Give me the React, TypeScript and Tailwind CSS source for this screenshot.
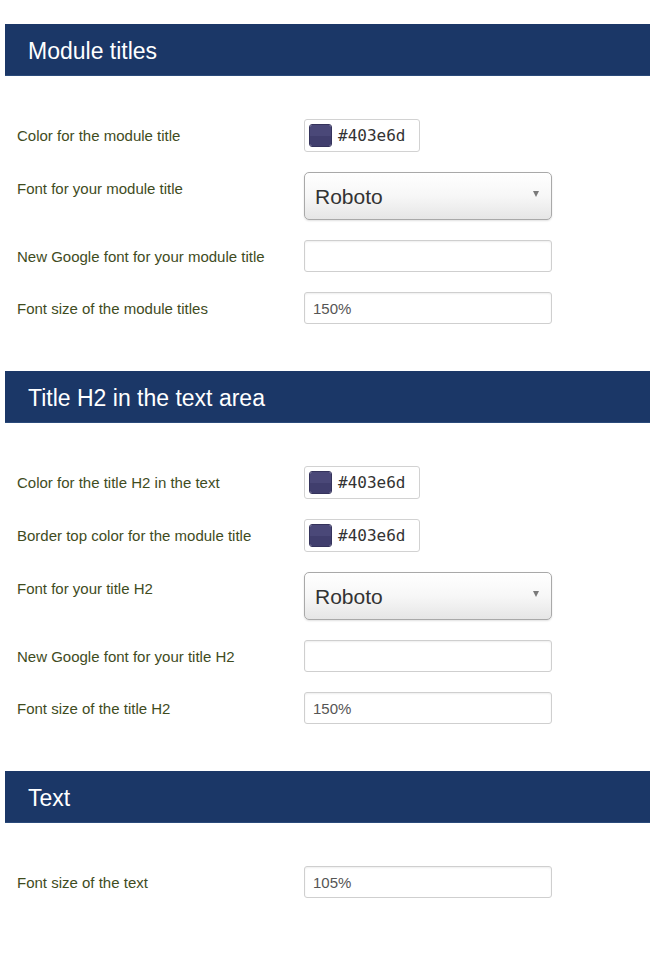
import React from "react";

const font = { fontFamily: '"Liberation Sans", Arial, Helvetica, sans-serif' };

function Header({ title }: { title: string }) {
  return (
    <div className="ml-[5px] h-[52px] bg-[#1b3767] flex items-center pl-[23px] border-b border-[#2a4a7a]">
      <span className="text-white text-[23px] leading-none pt-[3px]">{title}</span>
    </div>
  );
}

function Row({ label, children }: { label: string; children: React.ReactNode }) {
  return (
    <div className="flex items-start">
      <div className="w-[304px] shrink-0 pl-[17px] pt-[7px] text-[15px] leading-[20px] text-[#3f4c1e]">{label}</div>
      <div>{children}</div>
    </div>
  );
}

function ColorInput() {
  return (
    <div className="w-[116px] h-[33px] border border-[#d2d2d2] rounded-[3px] bg-white flex items-center pl-[4px] gap-[6px]">
      <div className="w-[23px] h-[23px] rounded-[3px] overflow-hidden flex flex-col border border-[#35335c]">
        <div className="h-1/2 bg-[#4a4878]" />
        <div className="h-1/2 bg-[#403e6d]" />
      </div>
      <span
        className="text-[16px] text-[#333] leading-none"
        style={{ fontFamily: '"DejaVu Sans Mono", "Liberation Mono", monospace' }}
      >
        #403e6d
      </span>
    </div>
  );
}

function SelectBox() {
  return (
    <div className="w-[248px] h-[48px] border border-[#a9a9a9] rounded-[5px] bg-gradient-to-b from-white via-[#f7f7f7] to-[#e6e6e6] shadow-[0_1px_2px_rgba(0,0,0,0.12)] flex items-center justify-between pl-[10px] pr-[12px]">
      <span className="text-[21px] text-[#333] leading-none">Roboto</span>
      <span className="w-0 h-0 border-l-[3.5px] border-r-[3.5px] border-t-[6px] border-l-transparent border-r-transparent border-t-[#7a7a7a] mb-[4px]" />
    </div>
  );
}

function TextInput({ value }: { value?: string }) {
  return (
    <div className="w-[248px] h-[32px] border border-[#cfcfcf] rounded-[3px] bg-white shadow-[inset_0_1px_2px_rgba(0,0,0,0.07)] flex items-center pl-[8px]">
      <span className="text-[15px] text-[#555] leading-none">{value}</span>
    </div>
  );
}

function Section({ title, children }: { title: string; children: React.ReactNode }) {
  return (
    <div>
      <Header title={title} />
      <div className="pt-[43px] flex flex-col gap-[20px]">{children}</div>
    </div>
  );
}

export default function App() {
  return (
    <div className="w-[650px] h-[965px] bg-white pt-[24px] flex flex-col gap-[47px]" style={font}>
      <Section title="Module titles">
        <Row label="Color for the module title">
          <ColorInput />
        </Row>
        <Row label="Font for your module title">
          <SelectBox />
        </Row>
        <Row label="New Google font for your module title">
          <TextInput />
        </Row>
        <Row label="Font size of the module titles">
          <TextInput value="150%" />
        </Row>
      </Section>
      <Section title="Title H2 in the text area">
        <Row label="Color for the title H2 in the text">
          <ColorInput />
        </Row>
        <Row label="Border top color for the module title">
          <ColorInput />
        </Row>
        <Row label="Font for your title H2">
          <SelectBox />
        </Row>
        <Row label="New Google font for your title H2">
          <TextInput />
        </Row>
        <Row label="Font size of the title H2">
          <TextInput value="150%" />
        </Row>
      </Section>
      <Section title="Text">
        <Row label="Font size of the text">
          <TextInput value="105%" />
        </Row>
      </Section>
    </div>
  );
}
